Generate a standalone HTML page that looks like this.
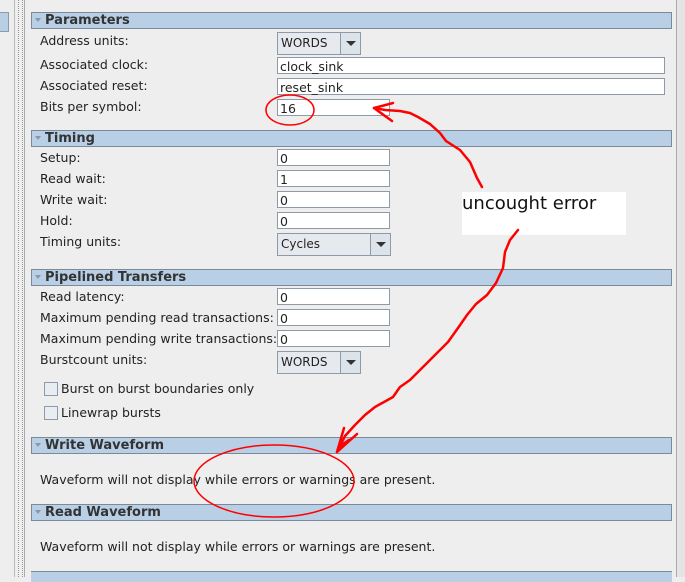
<!DOCTYPE html>
<html><head><style>
body{margin:0;width:685px;height:577px;background:#eeeeee;position:relative;overflow:hidden;font-family:"DejaVu Sans","Liberation Sans",sans-serif;font-size:12px;color:#222}
.a{position:absolute}
.h{position:absolute;left:31px;width:639px;height:15px;background:#b8cfe5;border:1px solid #7a8a99;font-weight:bold;font-size:13px;line-height:15px;color:#333}
.h:before{content:"";position:absolute;left:3px;top:5px;border-left:3px solid transparent;border-right:3px solid transparent;border-top:4px solid #8a96a3}
.h span{position:absolute;left:13px}
.l{position:absolute;left:40px;font-size:12.5px}
.i{position:absolute;left:277px;background:#fff;border:1px solid #8e9aa8;height:17px;line-height:17px;padding-left:2px;box-sizing:border-box;font-size:12.5px}
.c{position:absolute;left:277px;height:23px;border:1px solid #8e9aa8;background:#e6e9ed;box-sizing:border-box;font-size:12px;line-height:21px;padding-left:3px}
.c b{position:absolute;right:0;top:0;width:19px;height:21px;border-left:1px solid #8e9aa8;background:#dde3ea}
.c b:after{content:"";position:absolute;left:5px;top:8px;border-left:5px solid transparent;border-right:5px solid transparent;border-top:5px solid #333}
.cb{position:absolute;left:44px;width:12px;height:12px;border:1px solid #8e9aa8;background:#e8edf2}
</style></head><body>
<div class="a" style="left:0;top:12px;width:8px;height:18px;background:#b8cfe5;border:1px solid #8e9aa8;border-left:none"></div>
<div class="a" style="left:14px;top:0;width:1px;height:577px;background:#bbb"></div>
<div class="a" style="left:18px;top:0;width:3px;height:577px;border-left:1px dotted #999;border-right:1px dotted #999"></div>
<div class="a" style="left:24px;top:0;width:1px;height:577px;background:#aaa"></div>
<div class="a" style="left:676px;top:0;width:1px;height:577px;background:#aaa"></div>
<div class="a" style="left:677px;top:0;width:8px;height:577px;background:#e4e4e4"></div>

<div class="h" style="top:12px"><span>Parameters</span></div>
<div class="l" style="top:33px">Address units:</div>
<div class="c" style="top:32px;width:84px">WORDS<b></b></div>
<div class="l" style="top:57px">Associated clock:</div>
<div class="i" style="top:57px;width:388px">clock_sink</div>
<div class="l" style="top:78px">Associated reset:</div>
<div class="i" style="top:78px;width:388px">reset_sink</div>
<div class="l" style="top:99px">Bits per symbol:</div>
<div class="i" style="top:99px;width:113px">16</div>

<div class="h" style="top:130px"><span>Timing</span></div>
<div class="l" style="top:150px">Setup:</div><div class="i" style="top:149px;width:113px">0</div>
<div class="l" style="top:171px">Read wait:</div><div class="i" style="top:170px;width:113px">1</div>
<div class="l" style="top:192px">Write wait:</div><div class="i" style="top:191px;width:113px">0</div>
<div class="l" style="top:213px">Hold:</div><div class="i" style="top:212px;width:113px">0</div>
<div class="l" style="top:234px">Timing units:</div>
<div class="c" style="top:233px;width:114px">Cycles<b></b></div>

<div class="h" style="top:269px"><span>Pipelined Transfers</span></div>
<div class="l" style="top:289px">Read latency:</div><div class="i" style="top:288px;width:113px">0</div>
<div class="l" style="top:310px">Maximum pending read transactions:</div><div class="i" style="top:309px;width:113px">0</div>
<div class="l" style="top:331px">Maximum pending write transactions:</div><div class="i" style="top:330px;width:113px">0</div>
<div class="l" style="top:352px">Burstcount units:</div>
<div class="c" style="top:351px;width:84px">WORDS<b></b></div>
<div class="cb" style="top:382px"></div><div class="a" style="left:61px;top:381px;font-size:12.5px">Burst on burst boundaries only</div>
<div class="cb" style="top:406px"></div><div class="a" style="left:61px;top:405px;font-size:12.5px">Linewrap bursts</div>

<div class="h" style="top:437px"><span>Write Waveform</span></div>
<div class="l" style="top:472px">Waveform will not display while errors or warnings are present.</div>
<div class="h" style="top:504px"><span>Read Waveform</span></div>
<div class="l" style="top:539px">Waveform will not display while errors or warnings are present.</div>
<div class="a" style="left:31px;top:571px;width:641px;height:10px;background:#b8cfe5;border-top:1px solid #7a8a99"></div>

<div class="a" style="left:462px;top:192px;width:164px;height:43px;background:#fff;font-size:18px;line-height:24px;color:#111">uncought error</div>

<svg class="a" style="left:0;top:0" width="685" height="577">
<g fill="none" stroke="#f00" stroke-width="2.5" stroke-linecap="round" stroke-linejoin="round">
<path d="M482,187 L477,178 L470,162 L460,150 L446,141 L440,133 L430,124 L418,117 L410,113 L400,111 L385,110 L374,108"/>
<path d="M374,108 L393,103 M374,108 L392,121"/>
<path d="M518,230 L510,240 L505,252 L503,268 L496,283 L487,295 L476,304 L467,315 L458,328 L448,342 L432,358 L418,372 L410,380 L400,387 L393,397 L375,407 L365,415 L355,425 L345,436 L337,452"/>
<path d="M337,452 L344,428 M337,452 L357,434 M340,446 L349,440"/>
<ellipse cx="290" cy="110" rx="24" ry="15" stroke-width="1.5"/>
<ellipse cx="274" cy="481" rx="80" ry="36" stroke-width="1.5"/>
</g></svg>
</body></html>
